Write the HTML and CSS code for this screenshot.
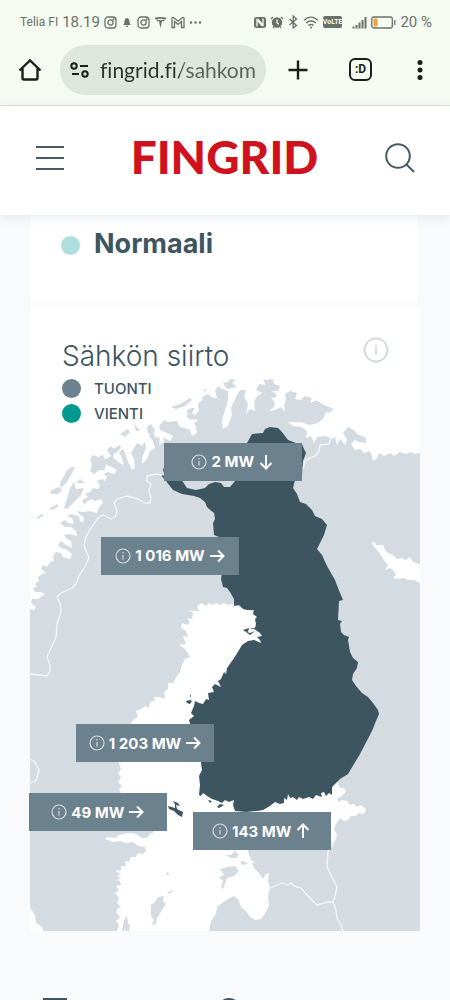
FILE: index.html
```html
<!DOCTYPE html>
<html lang="fi">
<head>
  <meta charset="UTF-8">
  <meta name="viewport" content="width=device-width, initial-scale=1">
  <title>Fingrid</title>
  <link rel="stylesheet" href="styles.css">
</head>
<body>
<div class="screen">

  <!-- Phone status bar -->
  <div class="status">
    <div class="status-side">
      <span class="carrier">Telia FI</span>
      <span class="clock">18.19</span>
      <svg class="ico" width="13" height="13" viewBox="0 0 13 13"><rect x="1" y="1" width="11" height="11" rx="3"/><circle cx="6.5" cy="6.5" r="2.6"/><circle cx="9.6" cy="3.4" r=".4"/></svg>
      <svg class="ico" width="12" height="13" viewBox="0 0 13 13"><path class="solid" d="M6.500 1.500c2 .4 2.700 2 2.700 4 0 2 .6 2.800 1.500 3.700H2.300c.9-.9 1.500-1.700 1.500-3.700 0-2 .7-3.600 2.700-4zM5 10h3c0 1.800-3 1.800-3 0z"/></svg>
      <svg class="ico" width="13" height="13" viewBox="0 0 13 13"><rect x="1" y="1" width="11" height="11" rx="3"/><circle cx="6.5" cy="6.5" r="2.6"/><circle cx="9.6" cy="3.4" r=".4"/></svg>
      <svg class="ico" width="13" height="13" viewBox="0 0 13 13"><path class="solid" d="M.5 1.800Q6.500 0 12.500 1.800L11.500 3.400Q6.500 2 1.500 3.400zM2.500 3.600l4 .7 4-.7-.6 1.800-1.900-.4L6.500 12.300 5 5l-1.900.4z"/></svg>
      <svg class="ico" width="14" height="13" viewBox="0 0 14 13"><path d="M1 11.500V2l1.500-.5L7 5.200l4.500-3.700L13 2v9.500h-2.500V5.500L7 8.500l-3.500-3v6z"/></svg>
      <svg class="ico" width="13" height="13" viewBox="0 0 13 13"><g class="solid"><circle cx="2" cy="6.500" r="1.200"/><circle cx="6.500" cy="6.500" r="1.200"/><circle cx="11" cy="6.500" r="1.200"/></g></svg>
    </div>
    <div class="status-side">
      <svg class="ico" width="12" height="13" viewBox="0 0 12 13"><rect class="solid" x="0" y="1" width="12" height="11" rx="2.500"/><path class="cut" d="M3 10.500V4l5.500 6M9 2.500V9L3.500 3"/></svg>
      <svg class="ico" width="14" height="13" viewBox="0 0 14 13"><path d="M1 3l2-2M11 1l2 2M3 12l1-1M11 12l-1-1"/><circle class="solid" cx="7" cy="6.500" r="5.200"/><path class="cut" d="M7 3.500v3.300l1.800 1.500"/></svg>
      <svg class="ico" width="11" height="14" viewBox="0 0 11 14"><path d="M1.500 4l7 6.500L5.200 13V1l3.300 3-7 6"/></svg>
      <svg class="ico" width="16" height="13" viewBox="0 0 16 13"><path d="M1 4.200q7-6 14 0M3 7q5-4 10 0M5.300 9.500q2.700-2 5.400 0"/><circle class="solid" cx="8" cy="11.500" r="1"/></svg>
      <span class="volte">VoLTE</span>
      <svg class="ico signal" width="15" height="13" viewBox="0 0 15 13"><path d="M1.500 12.500v-2M4.500 12.500V9M7.500 12.500V6.500M10.500 12.500V4M13.500 12.500V1"/></svg>
      <svg class="ico" width="25" height="13" viewBox="0 0 25 13"><rect x=".8" y="1" width="20.500" height="11" rx="2"/><path d="M23.800 4v5"/><rect class="charge" x="2.500" y="2.500" width="4" height="8" rx="1"/></svg>
      <span class="percent">20 %</span>
    </div>
  </div>

  <!-- Browser toolbar -->
  <div class="toolbar">
    <button class="tool" aria-label="Home"><svg width="24" height="24" viewBox="0 0 24 24"><path d="M1.500 12.500L12 2.500l10.500 10M4.500 10.500V20q0 1.500 1.500 1.500h12q1.500 0 1.500-1.500v-9.500"/></svg></button>
    <label class="address">
      <svg width="20" height="16" viewBox="0 0 20 16"><circle cx="4" cy="4" r="2.700"/><path d="M10 4h8M2 12h7"/><circle cx="15" cy="12" r="2.700"/></svg>
      <input class="url" type="text" aria-label="Address" value="fingrid.fi/sahkom">
    </label>
    <button class="tool tool-plus" aria-label="New tab"><svg width="24" height="24" viewBox="0 0 24 24"><path d="M12 2.500v19M2.500 12h19"/></svg></button>
    <button class="tool tool-tabs" aria-label="Tabs"><span class="tabs">:D</span></button>
    <button class="tool tool-more" aria-label="More"><svg width="24" height="24" viewBox="0 0 24 24"><g class="dots"><circle cx="12" cy="4.500" r="2.500"/><circle cx="12" cy="12" r="2.500"/><circle cx="12" cy="19.500" r="2.500"/></g></svg></button>
  </div>

  <header class="site-header">
    <button class="site-btn" aria-label="Valikko"><svg width="28" height="28" viewBox="0 0 28 28"><path d="M0 3h28M0 14h28M0 25h28"/></svg></button>
    <a class="logo" href="#">FINGRID</a>
    <button class="site-btn" aria-label="Haku"><svg width="30" height="30" viewBox="0 0 30 30"><circle cx="13" cy="13" r="11.800"/><path d="M21 21l8 8"/></svg></button>
  </header>

  <main class="content">
    <section class="card state">
      <span class="dot dot-normal"></span>
      <h2 class="state-title">Normaali</h2>
    </section>

    <section class="card transfer">
      <svg class="map" viewBox="30 305 390 626" aria-hidden="true">
        <!-- Scandinavia, Kola and Russia -->
        <path class="land" d="M30 609L34 610 36 607 31 603 32 599 38 599 45 594 40 592 35 592 33 588 37 587 35 584 39 581 38 577 42 574 46 573 41 569 43 565 47 567 50 562 54 561 53 556 56 552 61 553 63 557 70 559 72 554 67 550 61 548 58 545 61 541 66 545 72 548 71 541 67 539 64 535 70 534 77 536 76 531 71 527 65 527 60 523 65 520 68 523 74 524 72 518 67 516 71 514 79 516 80 521 83 523 84 517 79 514 77 511 83 512 90 511 97 513 99 507 103 503 101 499 95 501 91 499 84 504 82 500 88 497 85 494 90 492 93 488 98 489 100 485 97 481 102 479 105 481 107 476 103 474 108 472 114 474 117 470 112 467 106 465 106 459 111 456 107 450 111 446 115 450 113 457 118 462 124 465 122 458 119 452 123 449 126 455 128 462 132 470 135 468 134 458 131 453 134 448 137 443 142 446 145 442 146 448 142 458 142 464 147 459 150 451 155 448 153 441 149 436 153 431 155 437 160 438 159 445 164 442 163 437 170 441 173 436 167 433 160 430 159 426 164 420 168 422 177 421 180 427 185 428 190 430 192 436 197 433 196 427 194 423 198 421 196 419 190 420 186 416 192 413 195 415 199 411 198 405 203 402 202 397 208 394 213 398 217 398 215 390 218 386 222 389 228 391 228 400 225 410 222 420 223 429 228 426 232 415 231 408 236 397 240 390 246 390 244 397 248 404 246 414 250 409 255 411 254 402 257 396 262 393 256 390 259 384 266 385 263 380 273 379 274 384 280 386 278 391 272 391 277 395 275 398 271 397 275 403 274 407 269 411 275 410 281 407 285 412 284 405 286 400 285 394 290 391 297 393 295 399 301 400 304 396 312 398 310 403 315 401 318 401 324 405 334 409 329 413 326 412 323 419 318 423 310 425 300 422 288 422 293 426 301 427 307 431 306 438 311 436 314 443 317 437 326 436 331 439 335 437 337 445 340 439 345 445 347 439 343 433 348 427 354 430 357 434 366 438 366 443 359 442 355 440 351 444 355 450 360 449 364 453 370 451 373 461 377 458 379 453 384 456 390 453 394 456 400 452 406 454 411 452 415 454 420 453V931H30z"/>
        <path class="land" d="M31 518L33 516 32 519zM36 518L42 514 44 515 38 519zM49 509L57 504 58 507 52 510zM50 491L59 487 62 490 58 494 51 494zM60 483L64 476 67 470 72 467 75 467 71 475 66 483 61 488zM64 508L68 496 70 488 74 482 76 489 84 488 81 495 73 503 67 509zM76 483L80 479 85 483 80 483zM90 459L93 455 98 457 103 455 106 460 105 470 99 470 94 474 90 471 92 465zM109 453L113 449 120 445 121 448 116 453zM120 434L128 429 130 432 125 437zM134 423L137 427 140 431 136 431zM147 427L151 424 155 430 152 436 148 433zM171 407L180 404 190 398 192 400 185 406 176 409zM187 410L192 408 195 408 190 416 187 413zM198 403L203 400 204 405 199 406zM203 390L206 389 206 392zM223 383L228 382 230 379 236 380 232 383 237 387 227 389z"/>

        <!-- Baltic Sea -->
        <path class="sea" d="M202 603L206 606 209 603 213 605 216 603 220 605 224 603 228 605 233 604 242 608 250 609 257 617 300 700 340 788 345 788 342 791 346 789 345 793 341 796 342 800 347 801 350 805 354 804 357 807 361 805 366 809 364 814 359 813 356 816 351 816 348 820 344 821 340 818 336 824 334 829 337 835 328 850 248 850 249 855 252 861 256 862 252 863 254 868 259 873 263 879 266 874 269 873 268 880 270 889 268 896 269 905 266 912 261 919 255 920 250 917 247 912 241 907 238 899 234 896 228 899 222 903 217 907 216 914 211 921 209 931H129L130 925 127 922 125 931H117L119 925 116 921 120 917 116 912 118 908 121 907 117 903 119 898 115 893 119 890 116 886 121 885 120 881 115 880 121 879 117 876 121 874 115 871 121 870 121 866 126 866 125 861 129 862 131 857 136 857 138 853 143 854 146 851 145 847 138 846 133 842 126 843 120 841 113 842 105 839 107 837 116 838 118 835 124 834 130 833 136 834 142 838 147 838 150 834 154 832 155 828 122 795 119 789 122 786 118 782 121 777 118 773 121 769 119 763 120 740 131 723 134 719 138 717 136 711 141 709 145 706 149 708 150 702 155 701 154 697 160 697 165 699 164 692 168 689 168 683 173 683 177 676 180 672 182 665 185 659 190 657 187 652 184 648 179 645 186 644 183 636 188 637 186 631 181 628 182 623 187 625 190 622 187 618 192 619 193 613 189 610 195 611 199 611 197 606z"/>
        <!-- White Sea and the North Sea corner -->
        <path class="sea" d="M371 543L375 542 376 545 383 545 385 550 388 553 393 555 397 559 402 558 405 560 410 557 412 561 415 563 420 564V583L414 580 408 580 404 578 398 579 393 578 396 575 394 571 390 568 385 570 388 565 385 562 382 557 378 551zM30 908L35 915 36 923 42 927 43 931H30z"/>
        <!-- Baltic islands -->
        <path class="land" d="M151 905L155 902 158 897 164 896 163 901 166 904 162 910 159 915 157 918 156 924 152 925 154 920 151 916zM167 893L170 891 174 891 169 894zM166 873L168 872 169 875 167 875zM122 931L124 920 127 916 128 921 126 928 124 931zM225 855L231 855 235 851 239 855 236 858 231 858zM220 869L228 867 235 866 239 871 234 876 227 878 223 889 221 887 223 881 219 877 224 875zM240 862L244 861 248 864 242 865zM337 799L340 797 343 799 339 802z"/>

        <!-- Finland -->
        <path class="finland" d="M252 434L263 433 265 429 270 427 278 428 282 432 288 440 296 443 302 444 304 449 306 453 303 461 302 475 295 480 293 488 297 494 300 502 306 504 312 510 315 516 322 519 327 525 324 535 317 549 322 555 327 566 335 580 338 588 343 600 339 601 338 620 342 621 340 624 341 632 344 635 349 637 348 640 350 652 353 658 358 662 357 668 353 674 352 680 356 686 362 693 368 697 373 703 378 710 379 714 376 721 372 731 360 754 348 774 340 779 332 787 332 795 329 793 326 796 324 792 321 793 322 797 316 795 313 799 309 797 303 799 299 797 297 800 293 797 290 798 288 794 287 800 284 798 284 803 280 804 275 802 270 806 263 810 257 811 246 812 235 811 233 805 234 800 229 802 225 800 222 803 218 801 212 799 207 796 203 793 201 796 199 795 200 785 199 776 202 770 201 763 203 755 195 740 189 720 194 716 191 713 194 706 195 701 199 703 203 704 206 699 209 700 208 693 214 692 212 687 215 684 221 687 218 681 221 679 224 672 226 674 227 668 232 661 236 655 239 650 242 645 248 641 254 640 261 643 260 640 257 637 262 636 260 633 254 629 249 628 248 632 244 631 250 633 255 631 250 635 243 630 249 628 255 628 256 624 255 619 257 617 253 614 254 610 247 610 243 609 239 605 234 606 234 599 230 592 227 588 223 587 221 579 222 572 219 560 219 537 214 535 213 523 215 519 214 513 209 509 207 507 205 502 200 498 194 496 182 494 173 490 166 481 161 475 165 476 163 470 165 464 175 472 183 482 187 488 196 490 205 488 209 484 215 482 221 483 224 487 230 487 235 481 243 460 247 443zM186 701L190 700 192 701 190 704 187 703zM190 696L191 694 191 697zM208 800L212 801 210 803zM217 807L220 804 224 805 219 808z"/>
        <!-- Åland -->
        <path class="finland" d="M173 801L178 803 180 806 176 805 177 809 183 812 182 817 178 815 174 811 169 809 168 806 175 808 175 804z"/>

        <!-- Borders -->
        <path class="border" d="M162 475L156 474 147 476 147 481 151 484 149 491 151 498 150 503 145 503 138 499 127 496 117 499 114 503 117 511 115 517 111 519 103 515 98 518 91 528 86 537 84 545 86 551 89 557 86 565 80 574 76 584 72 588 61 593 57 597 60 603 61 612 57 624 56 637 52 646 47 657 50 665 50 671 47 676 39 675 30 674"/>
        <path class="border" d="M331 437L329 444 320 445 319 451 315 456 310 458 305 461 303 469"/>
        <path class="border" d="M30 759L35 762 39 770 36 781 30 783M337 835L333 844 328 851 327 867 332 877 337 887 335 896 333 902 328 902 317 905 307 895 301 888 294 886 291 883 288 885 282 883 270 888M333 902L336 910 337 918 341 925 343 931"/>
      </svg>

      <div class="transfer-head">
        <h2 class="transfer-title">Sähkön siirto</h2>
        <button class="info" aria-label="Lisätietoja"><svg width="26" height="26" viewBox="0 0 26 26"><circle cx="13" cy="13" r="11.500"/><path d="M13 11v7M13 7.500v2"/></svg></button>
        <ul class="legend">
          <li><span class="dot dot-import"></span>TUONTI</li>
          <li><span class="dot dot-export"></span>VIENTI</li>
        </ul>
      </div>

      <div class="flow flow-norway"><svg class="flow-info" viewBox="0 0 16 16"><circle cx="8" cy="8" r="7"/><path d="M8 7v4.500M8 4v1.500"/></svg>2 MW<svg class="arrow" viewBox="0 0 16 16"><path d="M8 1v13M2.500 9L8 14.500 13.500 9"/></svg></div>
      <div class="flow flow-north"><svg class="flow-info" viewBox="0 0 16 16"><circle cx="8" cy="8" r="7"/><path d="M8 7v4.500M8 4v1.500"/></svg>1 016 MW<svg class="arrow" viewBox="0 0 16 16"><path d="M1 8h13M9 2.500L14.500 8 9 13.500"/></svg></div>
      <div class="flow flow-south"><svg class="flow-info" viewBox="0 0 16 16"><circle cx="8" cy="8" r="7"/><path d="M8 7v4.500M8 4v1.500"/></svg>1 203 MW<svg class="arrow" viewBox="0 0 16 16"><path d="M1 8h13M9 2.500L14.500 8 9 13.500"/></svg></div>
      <div class="flow flow-aland"><svg class="flow-info" viewBox="0 0 16 16"><circle cx="8" cy="8" r="7"/><path d="M8 7v4.500M8 4v1.500"/></svg>49 MW<svg class="arrow" viewBox="0 0 16 16"><path d="M1 8h13M9 2.500L14.500 8 9 13.500"/></svg></div>
      <div class="flow flow-estonia"><svg class="flow-info" viewBox="0 0 16 16"><circle cx="8" cy="8" r="7"/><path d="M8 7v4.500M8 4v1.500"/></svg>143 MW<svg class="arrow" viewBox="0 0 16 16"><path d="M8 15V2M2.500 7L8 1.500 13.500 7"/></svg></div>
    </section>

    <section class="next">
      <svg width="24" height="24" viewBox="0 0 24 24"><rect x="1" y="1" width="22" height="22"/></svg>
      <svg width="24" height="24" viewBox="0 0 24 24"><circle cx="12" cy="12" r="11"/></svg>
    </section>
  </main>

</div>
</body>
</html>
```
FILE: styles.css
```css
* {
  box-sizing: border-box;
}

body {
  margin: 0;
  font-family: Inter, "Liberation Sans", sans-serif;
  color: #3d5560;
  background: #f8fafc;
}

h2, ul {
  margin: 0;
  padding: 0;
  list-style: none;
}

button {
  padding: 0;
  border: none;
  background: none;
  cursor: pointer;
}

svg {
  display: block;
  flex: none;
  fill: none;
  stroke: currentColor;
}

.screen {
  height: 100vh;
  overflow: hidden;
}

/* status bar */
.status {
  display: flex;
  justify-content: space-between;
  align-items: center;
  height: 44px;
  padding: 0 18px 0 20px;
  background: #f5fbf1;
  color: #6b706a;
  font-family: Roboto, sans-serif;
}

.status-side {
  display: flex;
  align-items: center;
  gap: 4px;
}

.carrier {
  font-size: 12px;
}

.clock {
  font-size: 15px;
}

.ico {
  stroke-width: 1.3;
}

.solid {
  fill: currentColor;
  stroke: none;
}

.cut {
  stroke: #f5fbf1;
}

.volte {
  border-radius: 2px;
  background: #6b706a;
  color: #f5fbf1;
  font-size: 7px;
  font-weight: 700;
  line-height: 12px;
}

.signal {
  margin-left: 6px;
  stroke-width: 2;
}

.charge {
  fill: #f2a03c;
  stroke: none;
}

.percent {
  font-size: 15px;
}

/* browser toolbar */
.toolbar {
  display: flex;
  align-items: center;
  height: 62px;
  padding: 0 18px 10px;
  border-bottom: 1px solid #dfe5e0;
  background: #f5fbf1;
  color: #1b1f1b;
}

.tool {
  color: inherit;
}

.tool svg {
  stroke-width: 2.4;
}

.tool-plus {
  margin-left: 20px;
}

.tool-tabs {
  margin-left: 39px;
}

.tool-more {
  margin-left: 36px;
}

.tabs {
  display: block;
  width: 23px;
  height: 23px;
  border: 2px solid #1b1f1b;
  border-radius: 6px;
  font: 700 12px/18px Roboto, sans-serif;
}

.dots {
  fill: currentColor;
  stroke: none;
}

.address {
  display: flex;
  flex: 1;
  align-items: center;
  gap: 10px;
  min-width: 0;
  height: 50px;
  margin-left: 18px;
  padding: 0 10px;
  border-radius: 25px;
  background: #dee7dc;
}

.address svg {
  stroke-width: 2;
}

.url {
  flex: 1;
  min-width: 0;
  height: 30px;
  padding: 0;
  border: none;
  outline: none;
  background: linear-gradient(90deg, #2b312b 80px, #59615a 80px);
  background-clip: text;
  -webkit-background-clip: text;
  -webkit-text-fill-color: transparent;
  color: #2b312b;
  font: 21px Lato, sans-serif;
  font-variant-ligatures: none;
}

/* site header */
.site-header {
  position: relative;
  display: flex;
  justify-content: space-between;
  align-items: center;
  height: 109px;
  padding: 0 35px 6px 36px;
  background: #fff;
  box-shadow: 0 2px 10px rgba(61, 85, 96, 0.12);
}

.site-btn {
  color: #465a64;
}

.site-btn svg {
  stroke-width: 2;
}

.logo {
  padding-bottom: 2px;
  color: #d0121f;
  font: 900 46px/54px Lato, sans-serif;
  text-decoration: none;
}

/* cards */
.content {
  padding: 0 30px;
}

.card {
  background: #fff;
}

.state {
  display: flex;
  align-items: flex-start;
  gap: 14px;
  height: 88px;
  margin-right: 2px;
  padding: 12px 31px;
}

.state-title {
  font-size: 27px;
  line-height: 34px;
}

.dot {
  width: 19px;
  height: 19px;
  border-radius: 50%;
}

.dot-normal {
  margin-top: 9px;
  background: #afdfdc;
}

.dot-import {
  background: #6c818e;
}

.dot-export {
  background: #009891;
}

.transfer {
  position: relative;
  display: grid;
  margin-top: 2px;
}

.map,
.transfer-head {
  grid-area: 1 / 1;
}

.map {
  width: 100%;
}

.land {
  fill: #d4dce2;
  stroke: none;
}

.sea {
  fill: #fff;
  stroke: none;
}

.finland {
  fill: #3d5560;
  stroke: none;
}

.border {
  stroke: #f4f7fb;
  stroke-width: 1.3;
  stroke-linejoin: round;
}

.transfer-head {
  z-index: 1;
  display: grid;
  grid-template-columns: 1fr auto;
  align-content: start;
  padding: 32px 31px 0 32px;
}

.transfer-title {
  font-size: 28px;
  font-weight: 300;
  line-height: 39px;
}

.info {
  align-self: start;
  color: #d3dae0;
}

.info svg {
  stroke-width: 2;
}

.legend li {
  display: flex;
  align-items: center;
  gap: 13px;
  height: 25px;
  font-size: 15px;
  font-weight: 500;
}

/* transfer labels over the map */
.flow {
  position: absolute;
  z-index: 2;
  display: flex;
  align-items: center;
  justify-content: center;
  gap: 4px;
  width: 138px;
  height: 38px;
  background: #6c818e;
  color: #fff;
  font-size: 15px;
  font-weight: 700;
}

.flow-info {
  width: 16px;
  height: 16px;
  color: #d4dce2;
  stroke-width: 1.2;
}

.arrow {
  width: 16px;
  height: 16px;
  stroke-width: 2;
}

.flow-norway {
  left: 34.3%;
  top: 22%;
}

.flow-north {
  left: 18.2%;
  top: 37%;
}

.flow-south {
  left: 11.8%;
  top: 67%;
}

.flow-aland {
  left: -0.3%;
  top: 78%;
}

.flow-estonia {
  left: 41.7%;
  top: 81%;
}

/* start of the next section */
.next {
  display: flex;
  gap: 150px;
  padding: 67px 13px 0;
}

.next svg {
  stroke-width: 2;
}
```
